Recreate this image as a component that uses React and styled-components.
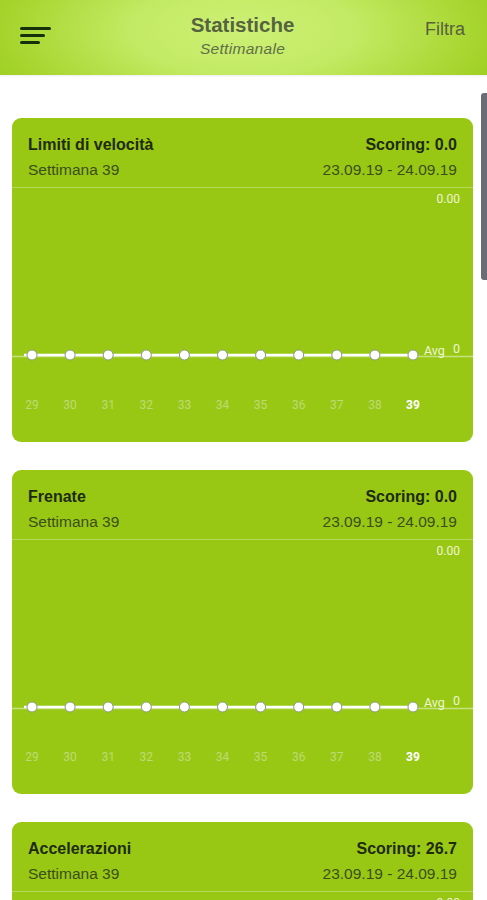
import React from "react";
import styled, { createGlobalStyle } from "styled-components";

const Global = createGlobalStyle`
  html, body { margin: 0; padding: 0; background: #ffffff; }
  body { font-family: "Liberation Sans", Arial, sans-serif; overflow: hidden; }
  #root { height: 900px; }
`;

const Page = styled.div`
  position: relative;
  width: 487px;
  height: 900px;
  overflow: hidden;
  background: #ffffff;
`;

const Header = styled.header`
  height: 75px;
  display: grid;
  grid-template-columns: 1fr auto 1fr;
  align-items: center;
  padding: 0 22px 0 20px;
  box-sizing: border-box;
  background: radial-gradient(ellipse 58% 150% at 50% 40%, #cdf076 0%, #c3ea63 40%, #a8d52f 82%, #9ccd20 100%);
  box-shadow: 0 1px 2px rgba(0, 0, 0, 0.08);
`;

const MenuButton = styled.div`
  display: flex;
  flex-direction: column;
  gap: 4px;
  padding-bottom: 4px;
`;

const MenuLine = styled.span`
  display: block;
  height: 3px;
  width: ${(p) => p.$w}px;
  border-radius: 1.5px;
  background: #16300a;
`;

const TitleBlock = styled.div`
  display: flex;
  flex-direction: column;
  align-items: center;
  gap: 3px;
  padding-bottom: 5px;
`;

const Title = styled.div`
  font-size: 20.5px;
  font-weight: 700;
  color: #55633f;
  line-height: 24px;
`;

const Subtitle = styled.div`
  font-size: 15.5px;
  font-style: italic;
  color: #5f6f48;
  line-height: 18px;
  letter-spacing: 0.3px;
`;

const Filter = styled.div`
  justify-self: end;
  font-size: 18px;
  color: #56603f;
  padding-bottom: 17px;
`;

const List = styled.main`
  display: flex;
  flex-direction: column;
  gap: 28px;
  padding: 43px 14px 0 12px;
`;

const Card = styled.section`
  height: 324px;
  border-radius: 9px;
  background: #99c814;
  display: flex;
  flex-direction: column;
  overflow: hidden;
`;

const CardHead = styled.div`
  height: 70px;
  box-sizing: border-box;
  padding: 17px 16px 0 16px;
  border-bottom: 1px solid #b7d95c;
  display: grid;
  grid-template-columns: 1fr auto;
  align-content: start;
  row-gap: 7px;
`;

const CardTitle = styled.div`
  font-size: 16px;
  font-weight: 700;
  color: #1d2a0c;
  line-height: 19px;
  justify-self: ${(p) => (p.$right ? "end" : "start")};
`;

const CardSub = styled.div`
  font-size: 15.5px;
  color: #3b4e1b;
  line-height: 18px;
  justify-self: ${(p) => (p.$right ? "end" : "start")};
`;

const ChartSvg = styled.svg`
  display: block;
  flex: 1;
  font-family: Roboto, "Liberation Sans", sans-serif;
`;

const Scrollbar = styled.div`
  position: absolute;
  right: 0;
  top: 93px;
  width: 6px;
  height: 187px;
  border-radius: 3px 0 0 3px;
  background: #6c6c76;
`;

const weeks = [29, 30, 31, 32, 33, 34, 35, 36, 37, 38, 39];

function Chart() {
  const x0 = 20;
  const step = 38.1;
  const y = 166.5;
  const last = x0 + step * 10;
  return (
    <ChartSvg width="461" height="253" viewBox="0 0 461 253">
      <text x="448" y="14" fontSize="12" fill="#eef6d8" textAnchor="end">0.00</text>
      <line x1="0" x2="461" y1={y + 1.5} y2={y + 1.5} stroke="#c6e27e" strokeWidth="1.5" />
      <line x1="12" x2={last} y1={y} y2={y} stroke="#ffffff" strokeWidth="2.5" />
      {weeks.map((w, i) => (
        <circle key={w} cx={x0 + step * i} cy={y} r="5" fill="#ffffff" stroke="#8c9a88" strokeWidth="1" />
      ))}
      <text x="412" y="166" fontSize="12.5" fill="#eef6d8">Avg</text>
      <text x="448" y="164" fontSize="12.5" fill="#eef6d8" textAnchor="end">0</text>
      {weeks.map((w, i) => (
        <text
          key={"l" + w}
          x={x0 + step * i}
          y="220"
          fontSize="12"
          textAnchor="middle"
          fill={i === 10 ? "#ffffff" : "#bddb77"}
          fontWeight={i === 10 ? 700 : 400}
        >
          {w}
        </text>
      ))}
    </ChartSvg>
  );
}

const cards = [
  { title: "Limiti di velocità", score: "0.0" },
  { title: "Frenate", score: "0.0" },
  { title: "Accelerazioni", score: "26.7" },
];

export default function App() {
  return (
    <Page>
      <Global />
      <Header>
        <MenuButton>
          <MenuLine $w={31} />
          <MenuLine $w={25} />
          <MenuLine $w={20} />
        </MenuButton>
        <TitleBlock>
          <Title>Statistiche</Title>
          <Subtitle>Settimanale</Subtitle>
        </TitleBlock>
        <Filter>Filtra</Filter>
      </Header>
      <List>
        {cards.map((c) => (
          <Card key={c.title}>
            <CardHead>
              <CardTitle>{c.title}</CardTitle>
              <CardTitle $right>Scoring: {c.score}</CardTitle>
              <CardSub>Settimana 39</CardSub>
              <CardSub $right>23.09.19 - 24.09.19</CardSub>
            </CardHead>
            <Chart />
          </Card>
        ))}
      </List>
      <Scrollbar />
    </Page>
  );
}
